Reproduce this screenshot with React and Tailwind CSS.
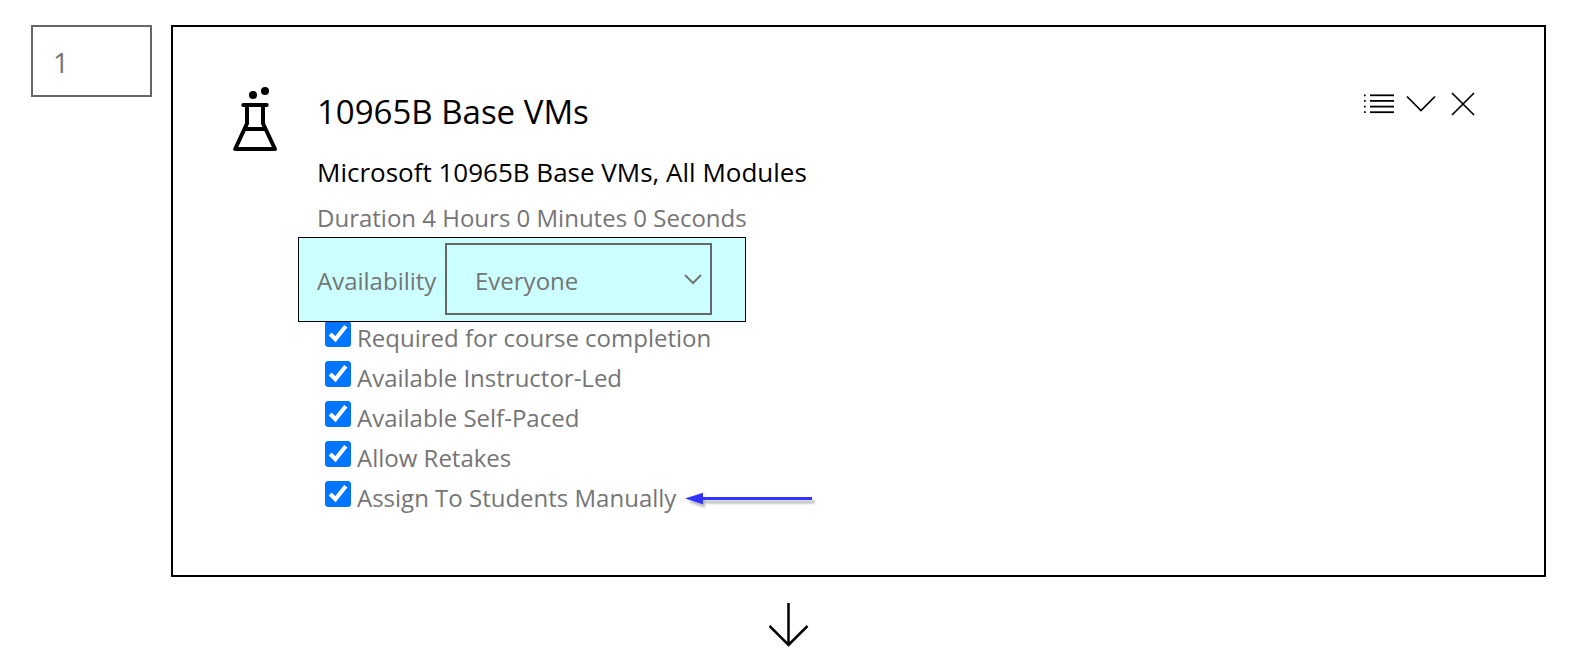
import React, { useState } from "react";

const OPTIONS = [
  { id: "required", label: "Required for course completion" },
  { id: "instructor", label: "Available Instructor-Led" },
  { id: "self-paced", label: "Available Self-Paced" },
  { id: "retakes", label: "Allow Retakes" },
  { id: "manual", label: "Assign To Students Manually", pointer: true },
];

function FlaskIcon() {
  return (
    <svg className="block h-16 w-11 shrink-0" viewBox="0 0 44 64" fill="none" stroke="#000" strokeWidth="4" strokeLinecap="round" strokeLinejoin="round" aria-hidden="true">
      <circle cx="20" cy="8" r="4" fill="#000" stroke="none" />
      <circle cx="32" cy="4" r="4" fill="#000" stroke="none" />
      <path d="M10.3 18H33.700" />
      <path d="M14 18V36.500L2.200 62H42L30 36.500V18" />
      <path d="M12 42H32" strokeLinecap="butt" />
    </svg>
  );
}

function ListIcon() {
  return (
    <svg className="block h-8 w-8" viewBox="0 0 32 32" stroke="#000" strokeWidth="1.800" aria-hidden="true">
      {[8.3, 13.9, 19.6, 25.200].map((y) => (
        <g key={y}>
          <path d={`M1 ${y}H2.700`} />
          <path d={`M7 ${y}H31`} />
        </g>
      ))}
    </svg>
  );
}

function ChevronIcon() {
  return (
    <svg className="block h-8 w-8" viewBox="0 0 32 32" fill="none" stroke="#000" strokeWidth="1.700" aria-hidden="true">
      <path d="M2 9.500L16 23.500L30 9.500" />
    </svg>
  );
}

function CloseIcon() {
  return (
    <svg className="block h-8 w-8" viewBox="0 0 32 32" fill="none" stroke="#000" strokeWidth="1.700" aria-hidden="true">
      <path d="M5 6L27 28M27 6L5 28" />
    </svg>
  );
}

function IconButton({ label, children }) {
  return (
    <button type="button" aria-label={label} className="flex h-8 w-[42px] items-center justify-center">
      {children}
    </button>
  );
}

function PointerArrow() {
  return (
    <svg className="ml-2 block h-5 w-[134px] shrink-0 overflow-visible" viewBox="0 0 134 20" aria-hidden="true">
      <g fill="#777" opacity="0.500" style={{ filter: "blur(1px)" }} transform="translate(4 3.500)">
        <path d="M0 10.500L17 4.700V16.300Z" />
        <path d="M16 9H127V12H16Z" />
      </g>
      <g fill="#3333ff">
        <path d="M1 10.500L19 4.700V16.300Z" />
        <path d="M17 9H128V12H17Z" />
      </g>
    </svg>
  );
}

export default function App() {
  const [order, setOrder] = useState("1");
  const [checked, setChecked] = useState(() => Object.fromEntries(OPTIONS.map((o) => [o.id, true])));

  return (
    <main className="bg-white pt-[25px] pr-[35px] pb-6 pl-[31px] font-['Open_Sans',sans-serif] text-[24px] text-[#757575]">
      <div className="flex items-start gap-[19px]">
        <input
          aria-label="Order"
          value={order}
          onChange={(e) => setOrder(e.target.value)}
          className="h-[72px] w-[121px] shrink-0 border-2 border-[#666] bg-white px-5 pt-0.5 text-[28px]"
        />
        <section className="flex min-w-0 flex-1 items-start border-2 border-black px-[60px] pt-[60px] pb-[54px]">
          <FlaskIcon />
          <div className="ml-10 min-w-0 flex-1">
            <div className="flex items-start justify-between">
              <h2 className="text-[33px] leading-[50px] text-black">10965B Base VMs</h2>
              <div className="flex">
                <IconButton label="Details"><ListIcon /></IconButton>
                <IconButton label="Expand"><ChevronIcon /></IconButton>
                <IconButton label="Remove"><CloseIcon /></IconButton>
              </div>
            </div>
            <p className="mt-2.5 mb-0.5 text-[26px] leading-[50px] text-black">Microsoft 10965B Base VMs, All Modules</p>
            <p className="leading-[38px]">Duration 4 Hours 0 Minutes 0 Seconds</p>
            <div className="relative z-10 -ml-[19px] flex h-[85px] w-[448px] items-start border border-black bg-[#ccffff] pt-[5px] pl-[18px]">
              <label htmlFor="availability" className="w-32 leading-[76px]">Availability</label>
              <div className="relative">
                <select id="availability" className="block h-[72px] w-[267px] appearance-none border-2 border-[#666] bg-transparent pt-1 pl-7">
                  <option>Everyone</option>
                </select>
                <svg className="pointer-events-none absolute top-[31px] right-2.5 h-3 w-[18px]" viewBox="0 0 18 12" fill="none" stroke="#757575" strokeWidth="2" aria-hidden="true">
                  <path d="M1 1L9 9L17 1" />
                </svg>
              </div>
            </div>
            <ul className="-mt-px">
              {OPTIONS.map((o) => (
                <li key={o.id} className="flex h-10 items-start">
                  <input
                    id={o.id}
                    type="checkbox"
                    checked={checked[o.id]}
                    onChange={() => setChecked({ ...checked, [o.id]: !checked[o.id] })}
                    className="ml-2 h-[26px] w-[26px] shrink-0 accent-[#0075ff] [clip-path:inset(0_round_3px)]"
                  />
                  <div className="flex items-center pl-1.5">
                    <label htmlFor={o.id} className="leading-[34px]">{o.label}</label>
                    {o.pointer && <PointerArrow />}
                  </div>
                </li>
              ))}
            </ul>
          </div>
        </section>
      </div>
      <div className="mt-6 flex justify-center">
        <svg className="block h-12 w-10" viewBox="0 0 40 48" fill="none" stroke="#000" strokeWidth="2.500" aria-hidden="true">
          <path d="M19.500 2V44M0.500 25L19.500 44L38.500 25" />
        </svg>
      </div>
    </main>
  );
}
